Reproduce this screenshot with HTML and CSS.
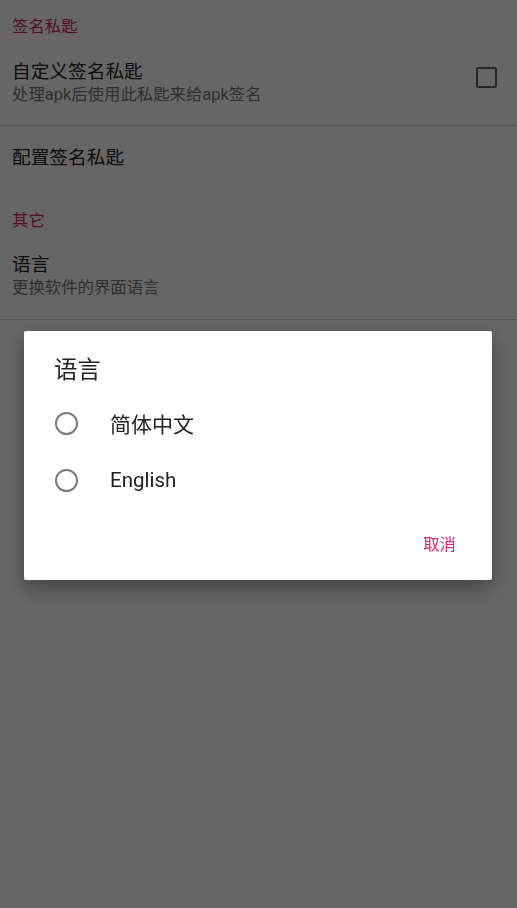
FILE: index.html
```html
<!DOCTYPE html>
<html lang="zh-CN">
<head>
<meta charset="utf-8">
<title>设置</title>
<link rel="stylesheet" href="styles.css">
</head>
<body>
<div class="prefs">
  <div class="category">签名私匙</div>
  <div class="item item-two">
    <div class="item-text">
      <div class="item-title">自定义签名私匙</div>
      <div class="item-summary">处理apk后使用此私匙来给apk签名</div>
    </div>
    <div class="checkbox"></div>
  </div>
  <div class="divider"></div>
  <div class="item item-one">
    <div class="item-text">
      <div class="item-title">配置签名私匙</div>
    </div>
  </div>
  <div class="category category-next">其它</div>
  <div class="item item-two item-lang">
    <div class="item-text">
      <div class="item-title">语言</div>
      <div class="item-summary">更换软件的界面语言</div>
    </div>
  </div>
  <div class="divider"></div>
</div>

<div class="scrim">
  <div class="dialog">
    <div class="dialog-title">语言</div>
    <div class="option">
      <span class="radio"></span>
      <span class="option-label">简体中文</span>
    </div>
    <div class="option">
      <span class="radio"></span>
      <span class="option-label latin">English</span>
    </div>
    <div class="actions">
      <span class="btn">取消</span>
    </div>
  </div>
</div>
</body>
</html>
```
FILE: styles.css
```css
* { box-sizing: border-box; }
html, body {
  margin: 0;
  padding: 0;
  background: #ffffff;
}
body {
  font-family: Roboto, "Noto Sans CJK SC", "Noto Sans", sans-serif;
  width: 517px;
  height: 908px;
  overflow: hidden;
}
.prefs {
  display: flex;
  flex-direction: column;
}
.category {
  padding: 16px 12px 0;
  font-size: 16.4px;
  line-height: 22px;
  color: #d81b60;
}
.category-next {
  padding-top: 20px;
}
.item {
  display: flex;
  align-items: center;
  padding: 0 20px 0 12px;
}
.item-two {
  padding-top: 22px;
  padding-bottom: 19px;
}
.item-lang {
  padding-top: 21px;
  padding-bottom: 20px;
}
.item-one {
  padding-top: 20px;
  padding-bottom: 20px;
}
.item-text {
  flex: 1;
  display: flex;
  flex-direction: column;
}
.item-title {
  font-size: 18.7px;
  line-height: 24px;
  color: #212121;
}
.item-summary {
  font-size: 16.4px;
  line-height: 22px;
  color: #757575;
}
.checkbox {
  width: 21px;
  height: 21px;
  border: 2.6px solid #616161;
  border-radius: 2px;
  margin-top: -12px;
}
.divider {
  height: 1px;
  background: #dcdcdc;
}

.scrim {
  position: fixed;
  inset: 0;
  background: rgba(0, 0, 0, 0.6);
  display: flex;
  align-items: flex-start;
  justify-content: flex-start;
  padding-top: 331px;
  padding-left: 24px;
}
.dialog {
  width: 468px;
  background: #ffffff;
  border-radius: 2px;
  box-shadow: 0 8px 20px rgba(0, 0, 0, 0.35);
  padding: 25px 0 17px;
  display: flex;
  flex-direction: column;
}
.dialog-title {
  padding: 0 30px;
  font-size: 23.4px;
  line-height: 28px;
  color: #212121;
  margin-bottom: 10.5px;
}
.option {
  height: 57px;
  display: flex;
  align-items: center;
  padding-left: 31px;
}
.radio {
  width: 23px;
  height: 23px;
  border: 2.3px solid #7a7a7a;
  border-radius: 50%;
  flex: none;
}
.option-label {
  margin-left: 32px;
  font-size: 21px;
  color: #212121;
}
.option-label.latin {
  font-size: 20.5px;
}
.actions {
  display: flex;
  justify-content: flex-end;
  margin-top: 18.5px;
  padding-right: 36px;
}
.btn {
  height: 36px;
  line-height: 36px;
  font-size: 16.4px;
  color: #e91e63;
}
```
